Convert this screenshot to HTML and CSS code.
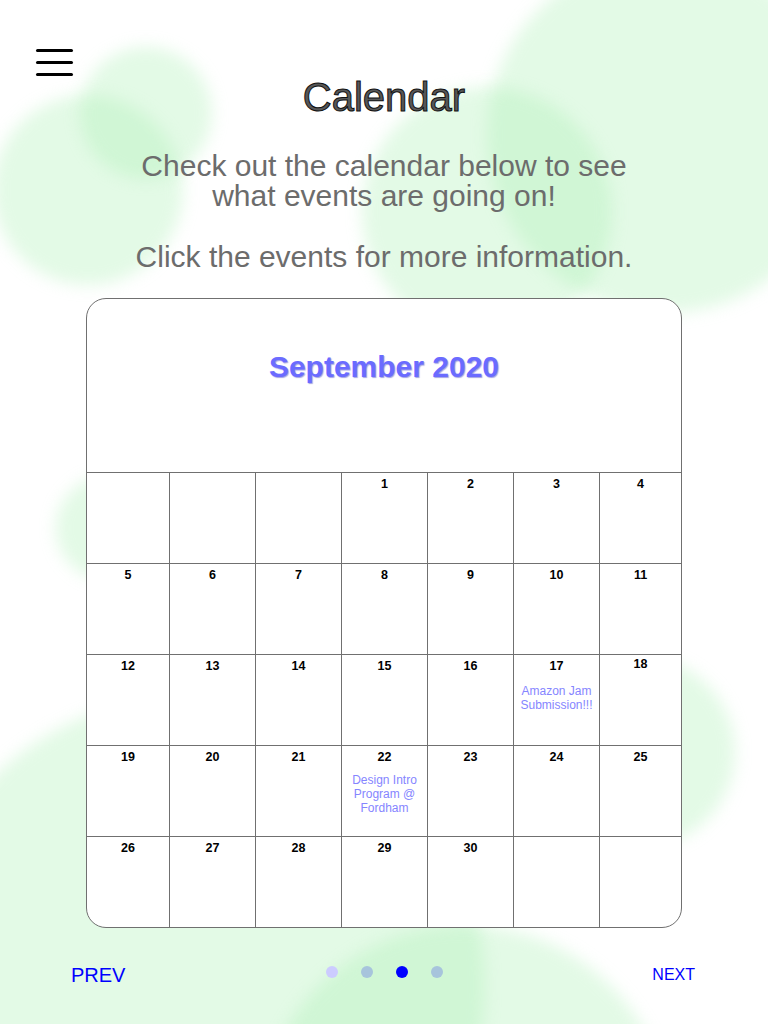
FILE: index.html
```html
<!DOCTYPE html>
<html lang="en">
<head>
<meta charset="utf-8">
<title>Calendar</title>
<link rel="stylesheet" href="styles.css">
</head>
<body>
<div class="backdrop" aria-hidden="true">
  <span class="blob b1"></span>
  <span class="blob b2"></span>
  <span class="blob b3"></span>
  <span class="blob b4"></span>
  <span class="blob b5"></span>
  <span class="blob b6"></span>
  <span class="blob b7"></span>
  <span class="blob b8"></span>
</div>
<main class="page">
  <div class="topbar">
    <button class="menu" aria-label="Menu"><span></span><span></span><span></span></button>
  </div>
  <h1 class="title">Calendar</h1>
  <p class="intro">Check out the calendar below to see<br>what events are going on!<br><br>Click the events for more information.</p>

  <section class="calendar">
    <h2 class="month">September 2020</h2>
    <div class="grid">
      <div class="cell"></div>
      <div class="cell"></div>
      <div class="cell"></div>
      <div class="cell"><span class="num">1</span></div>
      <div class="cell"><span class="num">2</span></div>
      <div class="cell"><span class="num">3</span></div>
      <div class="cell"><span class="num">4</span></div>

      <div class="cell"><span class="num">5</span></div>
      <div class="cell"><span class="num">6</span></div>
      <div class="cell"><span class="num">7</span></div>
      <div class="cell"><span class="num">8</span></div>
      <div class="cell"><span class="num">9</span></div>
      <div class="cell"><span class="num">10</span></div>
      <div class="cell"><span class="num">11</span></div>

      <div class="cell"><span class="num">12</span></div>
      <div class="cell"><span class="num">13</span></div>
      <div class="cell"><span class="num">14</span></div>
      <div class="cell"><span class="num">15</span></div>
      <div class="cell"><span class="num">16</span></div>
      <div class="cell"><span class="num">17</span><a class="event event-a" href="#">Amazon Jam Submission!!!</a></div>
      <div class="cell cell-raised"><span class="num">18</span></div>

      <div class="cell"><span class="num">19</span></div>
      <div class="cell"><span class="num">20</span></div>
      <div class="cell"><span class="num">21</span></div>
      <div class="cell"><span class="num">22</span><a class="event" href="#">Design Intro Program @ Fordham</a></div>
      <div class="cell"><span class="num">23</span></div>
      <div class="cell"><span class="num">24</span></div>
      <div class="cell"><span class="num">25</span></div>

      <div class="cell"><span class="num">26</span></div>
      <div class="cell"><span class="num">27</span></div>
      <div class="cell"><span class="num">28</span></div>
      <div class="cell"><span class="num">29</span></div>
      <div class="cell"><span class="num">30</span></div>
      <div class="cell"></div>
      <div class="cell"></div>
    </div>
  </section>

  <nav class="pager">
    <a class="prev" href="#">PREV</a>
    <div class="dots">
      <span class="dot dot-lilac"></span>
      <span class="dot dot-steel"></span>
      <span class="dot dot-active"></span>
      <span class="dot dot-steel"></span>
    </div>
    <a class="next" href="#">NEXT</a>
  </nav>
</main>
</body>
</html>
```

FILE: styles.css
```css
* { box-sizing: border-box; }

html, body {
  margin: 0;
  padding: 0;
}

body {
  width: 768px;
  height: 1024px;
  overflow: hidden;
  position: relative;
  background: #ffffff;
  font-family: "Liberation Sans", Arial, sans-serif;
  color: #000;
}

/* decorative blurred circles */
.backdrop {
  position: absolute;
  inset: 0;
  z-index: 0;
  overflow: hidden;
}

.blob {
  position: absolute;
  border-radius: 50%;
  background: rgba(167, 239, 177, 0.32);
  filter: blur(8px);
}

.b1 { left: 487px; top: -43px; width: 356px; height: 356px; }
.b2 { left: -7px; top: 95px; width: 190px; height: 190px; }
.b3 { left: 80px; top: 47px; width: 132px; height: 132px; }
.b4 { left: 362px; top: 87px; width: 250px; height: 250px; }
.b5 { left: 56px; top: 476px; width: 104px; height: 104px; }
.b6 { left: 545px; top: 657px; width: 190px; height: 190px; }
.b7 { left: -95px; top: 695px; width: 580px; height: 580px; }
.b8 { left: 260px; top: 925px; width: 410px; height: 410px; }

.page {
  position: relative;
  z-index: 1;
  display: flex;
  flex-direction: column;
}

.topbar {
  padding: 49px 0 0 36px;
}

.menu {
  display: flex;
  flex-direction: column;
  gap: 9px;
  width: 37px;
  padding: 0;
  margin: 0;
  border: 0;
  background: none;
}

.menu span {
  display: block;
  width: 37px;
  height: 3px;
  border-radius: 1.5px;
  background: #000;
}

.title {
  margin: -2px 0 0;
  text-align: center;
  font-size: 40px;
  line-height: 46px;
  font-weight: normal;
  color: #575757;
  -webkit-text-stroke: 1px #111;
}

.intro {
  margin: 31px 0 0;
  text-align: center;
  font-size: 30px;
  line-height: 30.3px;
  color: #6c6c6c;
}

.calendar {
  margin: 26px auto 0;
  width: 596px;
  height: 630px;
  border: 1px solid #707070;
  border-radius: 20px;
  background: #ffffff;
  display: flex;
  flex-direction: column;
}

.month {
  margin: 0;
  height: 173px;
  padding-top: 51px;
  text-align: center;
  font-size: 30px;
  line-height: 34px;
  font-weight: bold;
  color: #6b6bff;
  text-shadow: 1px 1px 1px rgba(50, 50, 190, 0.45);
}

.grid {
  display: grid;
  grid-template-columns: 83px repeat(5, 86px) 1fr;
  grid-auto-rows: 91px;
}

.cell {
  border-top: 1px solid #707070;
  border-right: 1px solid #707070;
  padding: 4px 3px 0;
  display: flex;
  flex-direction: column;
  align-items: center;
  text-align: center;
}

.cell:nth-child(7n) {
  border-right: 0;
}

.cell-raised {
  padding-top: 2px;
}

.num {
  font-size: 12.5px;
  line-height: 15px;
  font-weight: bold;
  color: #000;
}

.event {
  margin-top: 8px;
  font-size: 12px;
  line-height: 14px;
  color: #8585ff;
  text-decoration: none;
}

.event-a {
  margin-top: 10px;
}

.pager {
  margin-top: 35px;
  height: 24px;
  display: grid;
  grid-template-columns: 1fr auto 1fr;
  align-items: center;
  padding: 0 73px 0 71px;
}

.prev {
  justify-self: start;
  font-size: 20px;
  line-height: 24px;
  color: #0000ff;
  text-decoration: none;
}

.next {
  justify-self: end;
  font-size: 16px;
  line-height: 24px;
  color: #0000ff;
  text-decoration: none;
}

.dots {
  display: flex;
  gap: 23px;
  margin-bottom: 6px;
  margin-left: 3px;
}

.dot {
  display: block;
  width: 12px;
  height: 12px;
  border-radius: 50%;
}

.dot-lilac { background: #ccccff; }
.dot-steel { background: #a7c4dc; }
.dot-active { background: #0000ff; }
```
